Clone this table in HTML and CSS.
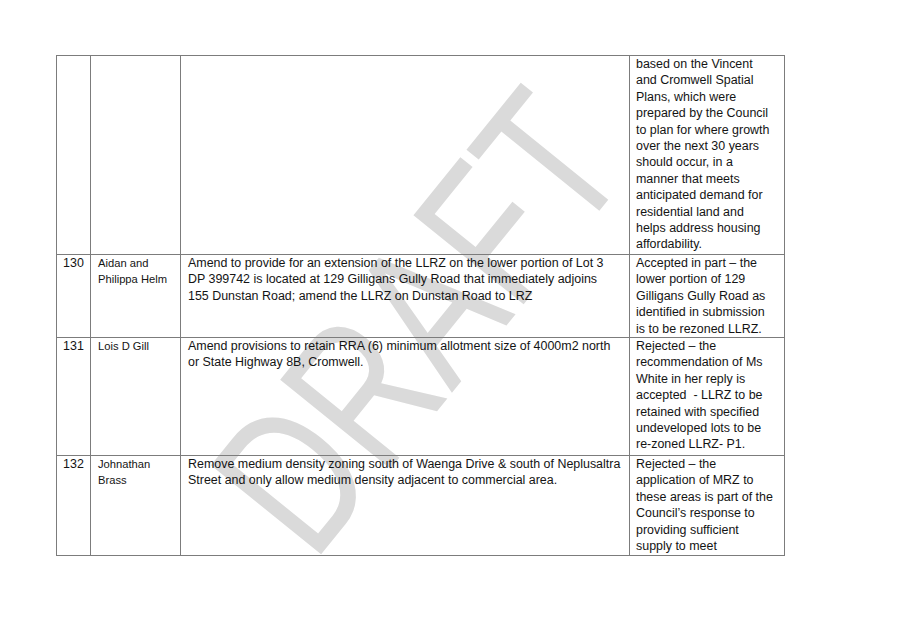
FILE: index.html
```html
<!DOCTYPE html>
<html>
<head>
<meta charset="utf-8">
<link rel="stylesheet" href="styles.css">
</head>
<body>
<div class="page">
  <div class="watermark" aria-hidden="true">DRAFT</div>
  <table class="subs">
    <colgroup>
      <col class="c-num"><col class="c-name"><col class="c-sub"><col class="c-dec">
    </colgroup>
    <tr class="r1">
      <td></td><td></td><td></td>
      <td class="dec">based on the Vincent<br>and Cromwell Spatial<br>Plans, which were<br>prepared by the Council<br>to plan for where growth<br>over the next 30 years<br>should occur, in a<br>manner that meets<br>anticipated demand for<br>residential land and<br>helps address housing<br>affordability.</td>
    </tr>
    <tr class="r2">
      <td class="num">130</td>
      <td class="name">Aidan and<br>Philippa Helm</td>
      <td class="sub">Amend to provide for an extension of the LLRZ on the lower portion of Lot 3<br>DP 399742 is located at 129 Gilligans Gully Road that immediately adjoins<br>155 Dunstan Road; amend the LLRZ on Dunstan Road to LRZ</td>
      <td class="dec">Accepted in part – the<br>lower portion of 129<br>Gilligans Gully Road as<br>identified in submission<br>is to be rezoned LLRZ.</td>
    </tr>
    <tr class="r3">
      <td class="num">131</td>
      <td class="name">Lois D Gill</td>
      <td class="sub">Amend provisions to retain RRA (6) minimum allotment size of 4000m2 north<br>or State Highway 8B, Cromwell.</td>
      <td class="dec">Rejected – the<br>recommendation of Ms<br>White in her reply is<br>accepted &nbsp;- LLRZ to be<br>retained with specified<br>undeveloped lots to be<br>re-zoned LLRZ- P1.</td>
    </tr>
    <tr class="r4">
      <td class="num">132</td>
      <td class="name">Johnathan<br>Brass</td>
      <td class="sub">Remove medium density zoning south of Waenga Drive &amp; south of Neplusaltra<br>Street and only allow medium density adjacent to commercial area.</td>
      <td class="dec">Rejected – the<br>application of MRZ to<br>these areas is part of the<br>Council’s response to<br>providing sufficient<br>supply to meet</td>
    </tr>
  </table>
</div>
</body>
</html>
```
FILE: styles.css
```css
html, body {
  margin: 0;
  padding: 0;
  background: #ffffff;
}
.page {
  position: relative;
  width: 907px;
  height: 626px;
  padding: 55px 0 0 56px;
  box-sizing: border-box;
  font-family: "Liberation Sans", Arial, sans-serif;
  color: #141414;
  overflow: hidden;
}
.watermark {
  position: absolute;
  left: 418px;
  top: 322px;
  transform: translate(-50%, -50%) rotate(-51deg) scaleX(0.74);
  font-family: "Liberation Sans", Arial, sans-serif;
  font-size: 206px;
  line-height: 1;
  color: #dadada;
  white-space: nowrap;
  z-index: 0;
}
.subs {
  position: relative;
  z-index: 1;
  border-collapse: collapse;
  table-layout: fixed;
  width: 728px;
}
.c-num { width: 34px; }
.c-name { width: 90px; }
.c-sub { width: 449px; }
.c-dec { width: 155px; }
.subs td {
  border: 1px solid #7c7c7c;
  vertical-align: top;
  padding: 0 6px 0 6px;
  font-size: 12.45px;
  line-height: 16.4px;
  white-space: nowrap;
}
.r1 td { height: 198px; }
.r2 td { height: 82px; }
.r3 td { height: 117px; }
.r4 td { height: 99px; }
.subs td.num {
  text-align: center;
  padding-left: 2px;
  padding-right: 2px;
}
.subs td.name {
  font-size: 11.2px;
  padding-left: 7px;
}
.subs td.sub {
  padding-left: 7px;
}
```
